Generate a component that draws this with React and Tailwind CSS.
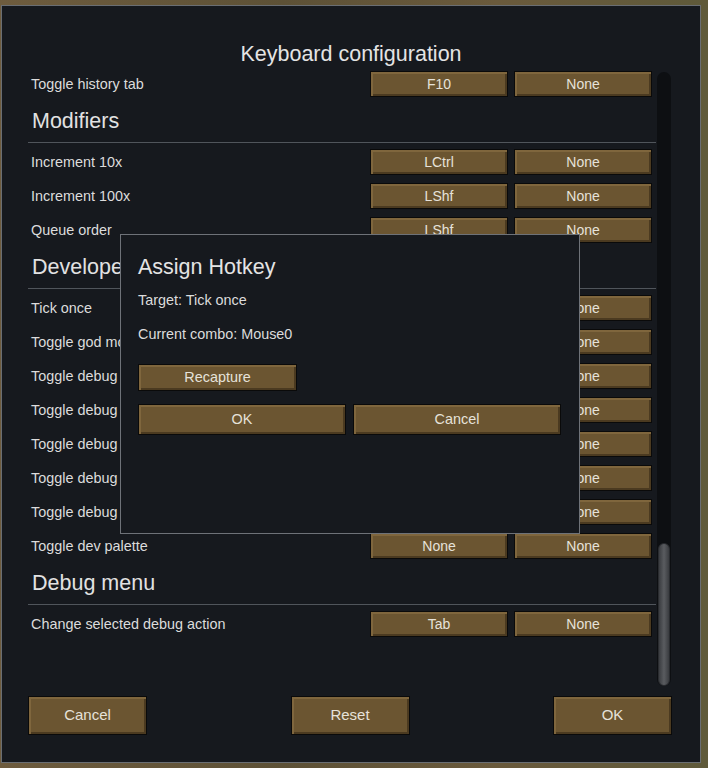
import React from 'react'

const sections = [
  { rows: [{ label: 'Toggle history tab', a: 'F10', b: 'None' }] },
  {
    title: 'Modifiers',
    rows: [
      { label: 'Increment 10x', a: 'LCtrl', b: 'None' },
      { label: 'Increment 100x', a: 'LShf', b: 'None' },
      { label: 'Queue order', a: 'LShf', b: 'None' },
    ],
  },
  {
    title: 'Developer',
    rows: [
      { label: 'Tick once', a: 'None', b: 'None' },
      { label: 'Toggle god mode', a: 'None', b: 'None' },
      { label: 'Toggle debug log', a: 'None', b: 'None' },
      { label: 'Toggle debug inspector', a: 'None', b: 'None' },
      { label: 'Toggle debug actions', a: 'None', b: 'None' },
      { label: 'Toggle debug settings', a: 'None', b: 'None' },
      { label: 'Toggle debug output', a: 'None', b: 'None' },
      { label: 'Toggle dev palette', a: 'None', b: 'None' },
    ],
  },
  {
    title: 'Debug menu',
    rows: [{ label: 'Change selected debug action', a: 'Tab', b: 'None' }],
  },
]

const GameButton = ({ children, className = '' }) => (
  <button
    className={`flex items-center justify-center border border-[#0a0a0a] bg-[#6b5531] text-[#e6e2da] shadow-[inset_2px_2px_0_#7f663d,inset_-2px_-2px_0_#4b3a20] ${className}`}
  >
    {children}
  </button>
)

const Row = ({ label, a, b }) => (
  <div className="flex h-[34px] items-center justify-between pl-[3px] pr-[4px]">
    <span className="pt-[2px] text-[14.4px] text-[#dcdcdc]">{label}</span>
    <div className="flex gap-[6px]">
      <GameButton className="h-[26px] w-[138px] text-[14px]">{a}</GameButton>
      <GameButton className="h-[26px] w-[138px] text-[14px]">{b}</GameButton>
    </div>
  </div>
)

const SectionHeader = ({ title }) => (
  <div className="mb-[2px] flex h-[42px] items-center border-b border-[#50555b] pl-[4px]">
    <span className="text-[21.5px] text-[#e2e2e2]">{title}</span>
  </div>
)

export default function App() {
  return (
    <div className="relative h-[768px] w-[708px] overflow-hidden bg-[linear-gradient(90deg,#6e5c3e,#5d5136_40%,#6a5a3c_70%,#5f5a3a)] font-['Liberation_Sans',Arial,sans-serif]">
      {/* Main window */}
      <div className="ml-[1px] mt-[5px] flex h-[758px] w-[700px] flex-col border border-[#6a6e73] bg-[#16191e]">
        <div className="flex h-[61px] justify-center pt-[35px]">
          <span className="text-[21.5px] leading-[26px] text-[#e4e4e4]">Keyboard configuration</span>
        </div>

        <div className="flex h-[619px]">
          <div className="ml-[26px] w-[628px] overflow-hidden">
            {sections.map((s, i) => (
              <div key={i}>
                {s.title && <SectionHeader title={s.title} />}
                {s.rows.map((r) => (
                  <Row key={r.label} {...r} />
                ))}
              </div>
            ))}
          </div>
          {/* Scrollbar */}
          <div className="ml-[1px] mt-[5px] flex h-[614px] w-[14px] flex-col justify-end rounded-full bg-[#0d0f12]">
            <div className="mx-[1px] h-[143px] rounded-full border border-[#2a2c30] bg-[linear-gradient(90deg,#3a3c40,#5a5c60_50%,#3a3c40)]" />
          </div>
        </div>

        <div className="flex justify-between pl-[26px] pr-[28px] pt-[10px]">
          <GameButton className="h-[39px] w-[119px] text-[15px]">Cancel</GameButton>
          <GameButton className="h-[39px] w-[119px] text-[15px]">Reset</GameButton>
          <GameButton className="h-[39px] w-[119px] text-[15px]">OK</GameButton>
        </div>
      </div>

      {/* Assign hotkey dialog */}
      <div className="absolute left-[120px] top-[234px] flex h-[300px] w-[460px] flex-col border border-[#6e7278] bg-[#16191e] pl-[17px] pt-[19px]">
        <span className="text-[21.5px] leading-[26px] text-[#e4e4e4]">Assign Hotkey</span>
        <span className="mt-[11px] text-[14.4px] leading-[18px] text-[#dcdcdc]">Target: Tick once</span>
        <span className="mt-[16px] text-[14.4px] leading-[18px] text-[#dcdcdc]">Current combo: Mouse0</span>
        <GameButton className="mt-[21px] h-[27px] w-[159px] text-[14.4px]">Recapture</GameButton>
        <div className="mt-[13px] flex gap-[7px]">
          <GameButton className="h-[31px] w-[208px] text-[14.4px]">OK</GameButton>
          <GameButton className="h-[31px] w-[208px] text-[14.4px]">Cancel</GameButton>
        </div>
      </div>
    </div>
  )
}
